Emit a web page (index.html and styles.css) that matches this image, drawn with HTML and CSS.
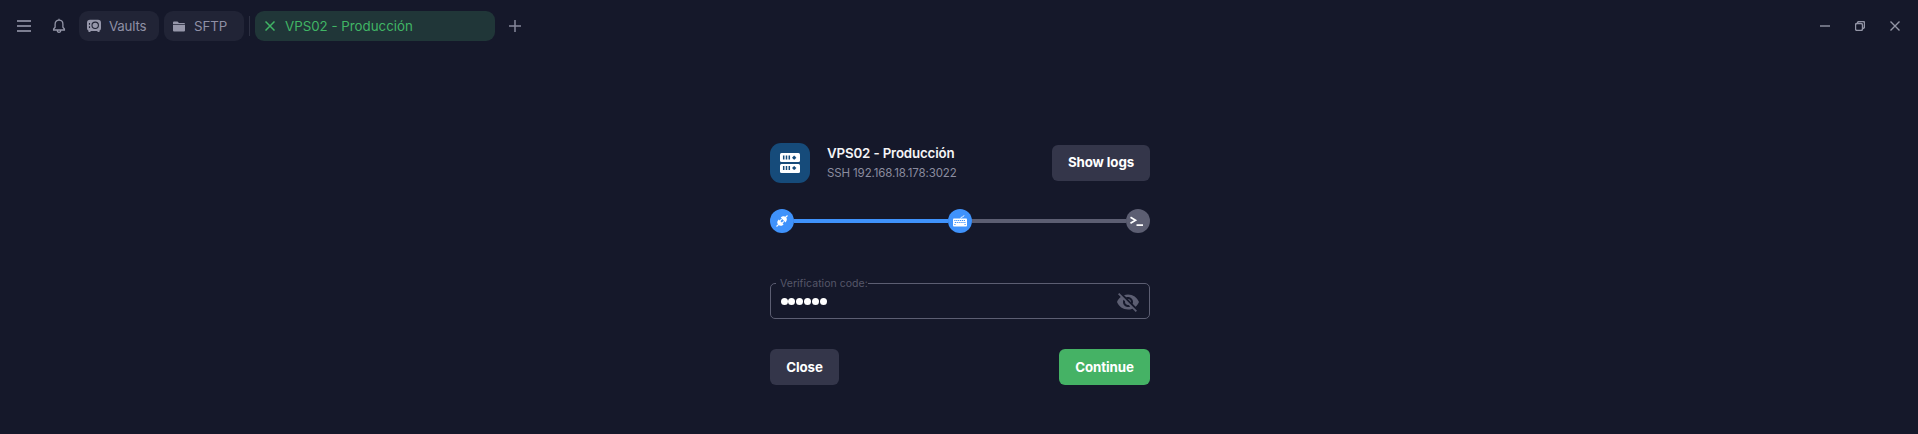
FILE: index.html
```html
<!DOCTYPE html>
<html lang="es">
<head>
<meta charset="utf-8">
<title>VPS02 - Producción</title>
<link rel="stylesheet" href="styles.css">
</head>
<body>
<header class="titlebar">
  <svg class="menu" width="14" height="12" viewBox="0 0 14 12"><path d="M0 1h14M0 6h14M0 11h14"/></svg>
  <svg class="bell" width="14" height="16" viewBox="0 0 14 16"><path d="M1.6 12V11L3.1 9.2V6.2C3.1 3.7 4.7 2.2 7 2.2s3.9 1.5 3.9 4v3L12.4 11v1zM7 2.2V.8M5.3 12.3c0 2.8 3.4 2.8 3.4 0"/></svg>
  <nav class="tabs">
    <div class="tab vaults">
      <svg width="14" height="14" viewBox="0 0 14 14"><path class="solid" d="M3 .8h8a3 3 0 0 1 3 3v5.400a3 3 0 0 1-1.500 2.600V13h-2v-.9h-7v.9h-2v-1.200A3 3 0 0 1 0 9.200V3.800a3 3 0 0 1 3-3z"/><circle class="cut" cx="8.200" cy="6.300" r="3.200"/><path class="cut" d="M2.500 4v1.800M2.500 7.200V9"/></svg>
      <span>Vaults</span>
    </div>
    <div class="tab sftp">
      <svg width="12" height="11" viewBox="0 0 12 11"><path class="solid" d="M1 .5h3.500L6 2h5q1 0 1 1H0V1.500Q0 .5 1 .5zM0 3.700h12V9.500q0 1-1 1H1q-1 0-1-1z"/></svg>
      <span>SFTP</span>
    </div>
    <i class="divider"></i>
    <div class="tab active">
      <svg width="10" height="10" viewBox="0 0 10 10"><path d="M.5.5l9 9M9.500.5l-9 9"/></svg>
      <span>VPS02 - Producción</span>
    </div>
  </nav>
  <svg class="plus" width="12" height="12" viewBox="0 0 12 12"><path d="M6 0v12M0 6h12"/></svg>
  <div class="window-controls">
    <svg width="10" height="10" viewBox="0 0 10 10"><path d="M0 5h10"/></svg>
    <svg width="10" height="10" viewBox="0 0 10 10"><rect x=".5" y="2.500" width="7" height="7" rx="1.500"/><path d="M2.500 2.200V2Q2.500.5 4 .5h4Q9.500.5 9.500 2v3.500Q9.500 7.500 7.800 7.500"/></svg>
    <svg width="10" height="10" viewBox="0 0 10 10"><path d="M.5.5l9 9M9.500.5l-9 9"/></svg>
  </div>
</header>
<main class="dialog">
  <section class="host">
    <div class="host-icon">
      <svg width="20" height="20" viewBox="0 0 20 20"><rect class="unit" width="20" height="9" rx="1.500"/><rect class="unit" y="11" width="20" height="9" rx="1.500"/><path class="slot" d="M3.700 2.500v4M6.500 2.500v4M9.300 2.500v4M3.700 13v4M6.500 13v4M9.300 13v4"/><path class="led" d="M14.200 2.700v4M12.200 4.700h4M14.200 13v4M12.200 15h4"/><circle class="dot" cx="14.200" cy="4.700" r="1.600"/><circle class="dot" cx="14.200" cy="15" r="1.600"/></svg>
    </div>
    <div class="host-text">
      <h1>VPS02 - Producción</h1>
      <p>SSH 192.168.18.178:3022</p>
    </div>
    <button class="logs">Show logs</button>
  </section>
  <section class="progress">
    <div class="step"><svg width="12" height="12" viewBox="0 0 12 12"><path class="wire" d="M.5 11.500l2.200-2.200M9.300 2.700l2.200-2.200M4 5.800l1.600-1.600M6.200 8L7.800 6.400"/><path class="white" d="M2.700 4.400l4.900 4.900C6 11.300 3.800 11.300 2.300 9.700.8 8.200.8 6.200 2.700 4.400zM4.700 2.600C6.300.8 8.500.7 9.900 2.100c1.400 1.400 1.300 3.600-.4 5.300z"/></svg></div>
    <i class="track done"></i>
    <div class="step"><svg width="14" height="12" viewBox="0 0 14 12"><path class="wire thin" d="M7.500 3.500C7.500 1.500 11 2.500 11 .3"/><rect class="white" y="3.500" width="14" height="8" rx=".8"/><path class="keys" d="M1.300 5.500h11.400M1.800 7.500h10.800M1.300 9.500h1.200M11.500 9.500h1.200"/></svg></div>
    <i class="track"></i>
    <div class="step pending"><svg width="14" height="12" viewBox="0 0 14 12"><path d="M.5 2.200l5 3L.5 8.200M6.500 10.200H13"/></svg></div>
  </section>
  <fieldset class="field">
    <legend>Verification code:</legend>
    <div class="field-row">
      <div class="code"><b></b><b></b><b></b><b></b><b></b><b></b></div>
      <svg width="24" height="24" viewBox="0 0 24 24"><path d="M12 7c2.760 0 5 2.240 5 5 0 .65-.13 1.260-.36 1.830l2.920 2.920c1.510-1.260 2.700-2.890 3.430-4.750-1.730-4.390-6-7.500-11-7.500-1.400 0-2.740.25-3.980.7l2.160 2.160C10.740 7.130 11.350 7 12 7zM2 4.270l2.280 2.280.46.46C3.080 8.300 1.780 10.020 1 12c1.730 4.390 6 7.500 11 7.500 1.550 0 3.030-.3 4.380-.84l.42.42L19.730 22 21 20.730 3.270 3 2 4.270zM7.530 9.800l1.550 1.550c-.05.21-.08.43-.08.65 0 1.660 1.340 3 3 3 .22 0 .44-.03.65-.08l1.550 1.550c-.67.33-1.410.53-2.200.53-2.760 0-5-2.240-5-5 0-.79.2-1.530.53-2.200zm4.310-.78l3.150 3.150.02-.16c0-1.660-1.340-3-3-3l-.17.01z"/></svg>
    </div>
  </fieldset>
  <section class="actions">
    <button class="close">Close</button>
    <button class="continue">Continue</button>
  </section>
</main>
</body>
</html>
```
FILE: styles.css
```css
* { box-sizing: border-box; }
body { margin: 0; height: 434px; overflow: hidden; background: #15182a; font-family: Inter, "Liberation Sans", sans-serif; }
svg { display: block; flex: none; fill: none; stroke: currentColor; }
.titlebar { height: 52px; display: flex; align-items: center; padding: 0 18px 0 17px; color: #85869a; }
.menu { stroke-width: 1.8; color: #7c7e91; }
.bell { margin: 0 13px 0 21px; stroke-width: 1.3; stroke: #9294a6; }
.tabs { display: flex; align-items: center; gap: 5px; }
.tab { height: 30px; width: 80px; border-radius: 9px; background: #212436; display: flex; align-items: center; font-size: 13.3px; color: #8f90a5; white-space: nowrap; }
.tab span { padding-bottom: 1px; }
.solid { fill: #9697aa; stroke: none; }
.cut { stroke: #212436; stroke-width: 1.1; }
.vaults { padding-left: 8px; gap: 8px; }
.vaults span { letter-spacing: -.2px; }
.sftp { padding-left: 9px; gap: 9px; }
.sftp span { letter-spacing: -.1px; }
.divider { width: 1px; height: 20px; background: #2d3042; }
.active { width: 240px; padding-left: 10px; gap: 10px; background: #203638; color: #40b565; }
.active svg { stroke-width: 1.5; }
.plus { margin-left: 14px; stroke-width: 1.5; }
.window-controls { margin-left: auto; display: flex; gap: 25px; color: #9395a6; stroke-width: 1.4; }
.dialog { width: 380px; margin: 91px 0 0 770px; }
.host { height: 40px; display: flex; align-items: center; }
.host-icon { width: 40px; height: 40px; border-radius: 11px; background: #164b7a; display: grid; place-items: center; }
.unit { fill: #fff; stroke: none; }
.slot { stroke: #164b7a; stroke-width: 1.5; }
.led { stroke: #164b7a; stroke-width: .8; }
.dot { fill: #164b7a; stroke: none; }
.host-text { margin-left: 17px; }
h1 { margin: 0; font-size: 13.3px; line-height: 19px; font-weight: 600; color: #f4f4f6; letter-spacing: -.15px; white-space: nowrap; }
p { margin: 0; font-size: 11.5px; line-height: 20px; color: #8b8c9f; letter-spacing: -.12px; white-space: nowrap; }
button { height: 36px; border: 0; padding: 0; border-radius: 6px; background: #34364a; color: #fff; font: 700 13.3px Inter, "Liberation Sans", sans-serif; letter-spacing: -.1px; white-space: nowrap; }
.logs { width: 98px; margin-left: auto; padding-bottom: 2px; }
.progress { margin-top: 26px; height: 24px; display: flex; align-items: center; }
.step { width: 24px; height: 24px; border-radius: 50%; background: #3f92fb; display: grid; place-items: center; color: #fff; }
.track { flex: 1; height: 4px; background: #5c5e72; }
.done { background: #3f92fb; }
.pending { background: #5c5e72; }
.pending svg { stroke-width: 1.7; margin-right: 2px; }
.white { fill: #fff; stroke: none; }
.wire { stroke-width: 1.2; }
.thin { stroke-width: .9; }
.keys { stroke: #3f92fb; stroke-width: 1; stroke-dasharray: 1.2 .7; }
.field { margin: 44px 0 0; height: 42px; min-width: 0; padding: 0 9px 0 5px; border: 1px solid #5c5e72; border-radius: 5px; }
legend { height: 12px; line-height: 14px; padding: 0 0 0 4px; font-size: 10.5px; letter-spacing: .03px; color: #555769; white-space: nowrap; }
.field-row { height: 25px; display: flex; align-items: center; justify-content: space-between; padding-left: 4.500px; color: #5c5e72; }
.field-row svg { fill: currentColor; stroke: none; }
.code { display: flex; gap: .85px; padding-bottom: 1px; }
.code b { width: 7px; height: 7px; border-radius: 50%; background: #fff; }
.actions { margin-top: 30px; display: flex; justify-content: space-between; }
.close { width: 69px; }
.continue { width: 91px; background: #45b265; }
```
